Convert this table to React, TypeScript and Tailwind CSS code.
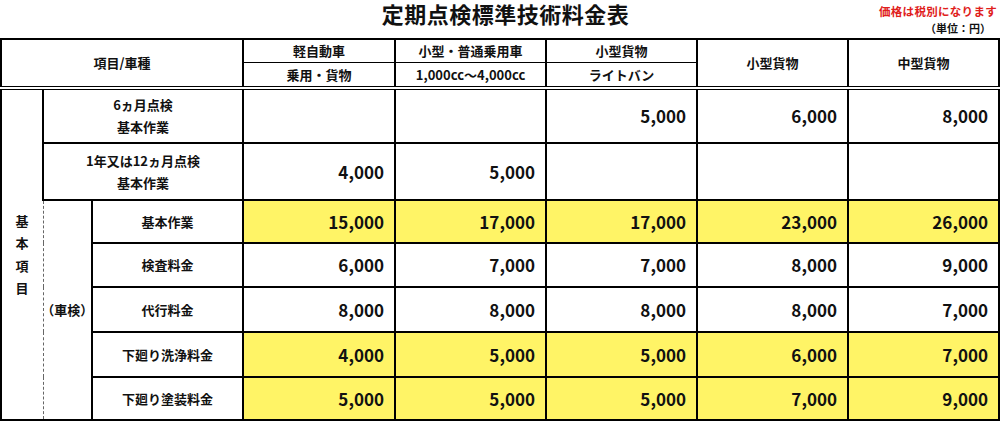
import React from 'react';

type Row = {
  label: string;
  values: string[];
  yellow?: boolean;
  h: string;
};

const shakenRows: Row[] = [
  { label: '基本作業', values: ['15,000', '17,000', '17,000', '23,000', '26,000'], yellow: true, h: 'h-[43px]' },
  { label: '検査料金', values: ['6,000', '7,000', '7,000', '8,000', '9,000'], h: 'h-[44px]' },
  { label: '代行料金', values: ['8,000', '8,000', '8,000', '8,000', '7,000'], h: 'h-[45px]' },
  { label: '下廻り洗浄料金', values: ['4,000', '5,000', '5,000', '6,000', '7,000'], yellow: true, h: 'h-[45px]' },
  { label: '下廻り塗装料金', values: ['5,000', '5,000', '5,000', '7,000', '9,000'], yellow: true, h: 'h-[43px]' },
];

const cell = 'border-2 border-black p-0';
const num = 'border-2 border-black p-0 pr-[10px] text-right align-middle text-[17px] font-bold';

export default function App() {
  return (
    <div className="w-[1000px] h-[422px] bg-white text-[#111] font-['Noto_Sans_CJK_JP',sans-serif] overflow-hidden">
      {/* title area */}
      <div className="flex h-[38px] items-start">
        <div className="flex-1" />
        <h1 className="ml-[14px] pt-[1px] text-[22px] leading-[24px] font-bold tracking-[0.5px] whitespace-nowrap">
          定期点検標準技術料金表
        </h1>
        <div className="flex flex-1 flex-col items-end pr-[3px] font-bold">
          <span className="text-[11.5px] leading-[14px] pt-[4px] text-[#e0201b] tracking-[0.3px]">価格は税別になります</span>
          <span className="text-[11px] leading-[13px] pt-[4px] pr-[6px]">（単位：円）</span>
        </div>
      </div>

      <table className="w-[998px] table-fixed border-collapse text-[13px] font-bold">
        <colgroup>
          <col className="w-[42px]" />
          <col className="w-[49px]" />
          <col className="w-[151px]" />
          <col className="w-[152px]" />
          <col className="w-[151px]" />
          <col className="w-[151px]" />
          <col className="w-[151px]" />
          <col className="w-[151px]" />
        </colgroup>
        <thead>
          <tr className="h-[23px]">
            <th colSpan={3} rowSpan={2} className={`${cell} border-b-4 border-b-black [border-bottom-style:double] font-bold`}>
              項目/車種
            </th>
            <th className={`${cell} border-b font-bold`}>軽自動車</th>
            <th className={`${cell} border-b font-bold`}>小型・普通乗用車</th>
            <th className={`${cell} border-b font-bold`}>小型貨物</th>
            <th rowSpan={2} className={`${cell} border-b-4 [border-bottom-style:double] font-bold`}>小型貨物</th>
            <th rowSpan={2} className={`${cell} border-b-4 [border-bottom-style:double] font-bold`}>中型貨物</th>
          </tr>
          <tr className="h-[26px]">
            <th className={`${cell} border-t border-b-4 [border-bottom-style:double] font-bold`}>乗用・貨物</th>
            <th className={`${cell} border-t border-b-4 [border-bottom-style:double] font-bold`}>1,000cc～4,000cc</th>
            <th className={`${cell} border-t border-b-4 [border-bottom-style:double] font-bold`}>ライトバン</th>
          </tr>
        </thead>
        <tbody>
          <tr className="h-[55px]">
            <td rowSpan={7} className={`${cell} border-r-0 border-t-4 [border-top-style:double]`}>
              <div className="flex flex-col items-center leading-[22.5px]">
                <span>基</span>
                <span>本</span>
                <span>項</span>
                <span>目</span>
              </div>
            </td>
            <td colSpan={2} className={`${cell} text-center leading-[22px]`}>
              6ヵ月点検
              <br />
              基本作業
            </td>
            <td className={num}></td>
            <td className={num}></td>
            <td className={num}>5,000</td>
            <td className={num}>6,000</td>
            <td className={num}>8,000</td>
          </tr>
          <tr className="h-[57px]">
            <td colSpan={2} className={`${cell} text-center leading-[22px]`}>
              1年又は12ヵ月点検
              <br />
              基本作業
            </td>
            <td className={num}>4,000</td>
            <td className={num}>5,000</td>
            <td className={num}></td>
            <td className={num}></td>
            <td className={num}></td>
          </tr>
          {shakenRows.map((row, i) => (
            <tr key={row.label} className={row.h}>
              {i === 0 && (
                <td
                  rowSpan={5}
                  className={`${cell} border-l-[1px] border-l-[#666] [border-left-style:dashed]`}
                >
                  <div className="flex justify-center whitespace-nowrap">（車検）</div>
                </td>
              )}
              <td className={`${cell} text-center`}>{row.label}</td>
              {row.values.map((v, j) => (
                <td key={j} className={`${num} ${row.yellow ? 'bg-[#fff466]' : ''}`}>
                  {v}
                </td>
              ))}
            </tr>
          ))}
        </tbody>
      </table>
    </div>
  );
}
